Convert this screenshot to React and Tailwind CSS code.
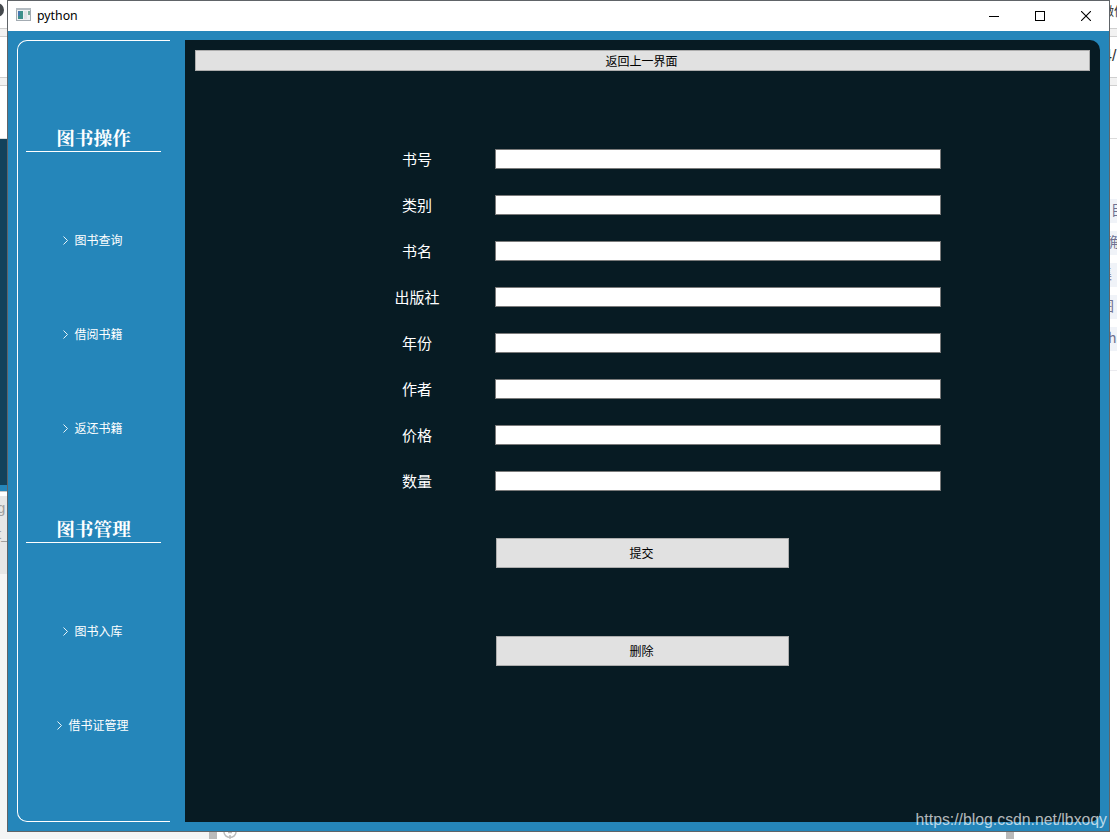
import React from "react";

const sections = [
  { title: "图书操作", items: ["图书查询", "借阅书籍", "返还书籍"] },
  { title: "图书管理", items: ["图书入库", "借书证管理"] },
];

const fields = ["书号", "类别", "书名", "出版社", "年份", "作者", "价格", "数量"];

const tags = [
  { text: "目", offset: "ml-px" },
  { text: "确", offset: "-ml-[5px]" },
  { text: "集", offset: "-ml-[12px]" },
  { text: "图", offset: "-ml-[10px]" },
  { text: "ha", offset: "-ml-[2px]" },
];

const TitleBar = () => (
  <div className="h-[30px] bg-white flex items-center justify-between">
    <div className="flex items-center pl-2">
      <svg className="w-4 h-4" viewBox="0 0 16 16">
        <rect x="0.5" y="0.5" width="14" height="12" fill="#eef0f2" stroke="#a3abb2" />
        <rect x="0" y="0" width="15" height="2" fill="#b4bcc2" />
        <rect x="2" y="3" width="5" height="8" fill="#3d8f8a" />
        <rect x="2" y="3" width="2" height="5" fill="#4478b0" />
        <rect x="8" y="3" width="3" height="8" fill="#dfe2e4" />
        <rect x="12" y="3" width="2" height="4" fill="#79ad9c" />
      </svg>
      <span className="ml-[5px] text-[12.3px] leading-[30px] text-black font-['Noto_Sans','Open_Sans',sans-serif]">
        python
      </span>
    </div>
    <div className="flex">
      <button className="w-[45px] h-[30px] flex items-center justify-center">
        <svg width="11" height="10" shapeRendering="crispEdges">
          <rect y="5" width="10" height="1" />
        </svg>
      </button>
      <button className="w-[46px] h-[30px] flex items-center justify-center">
        <svg width="10" height="10" shapeRendering="crispEdges">
          <rect x="0.5" y="0.5" width="9" height="9" fill="none" stroke="#000" />
        </svg>
      </button>
      <button className="w-[46px] h-[30px] flex items-center justify-center">
        <svg width="10" height="10">
          <path d="M0 0L10 10M10 0L0 10" stroke="#000" strokeWidth="1.1" />
        </svg>
      </button>
    </div>
  </div>
);

const Sidebar = () => (
  <div className="w-[153px] shrink-0 border border-r-0 border-white rounded-l-[10px] pl-2 pr-[9px] text-white">
    {sections.map((section, index) => (
      <div key={section.title}>
        <div
          className={`border-b border-white flex items-end justify-center ${
            index === 0 ? "h-[111px]" : "h-[68px]"
          }`}
        >
          <h3 className="pb-px text-[18.7px] leading-[26px] font-bold font-['Noto_Serif_CJK_SC','Noto_Sans_CJK_SC',serif]">
            {section.title}
          </h3>
        </div>
        <div className="pt-[41px]">
          {section.items.map((item) => (
            <button
              key={item}
              className="w-full h-[94px] flex items-center justify-center gap-[6px] pr-px text-[12px]"
            >
              <svg width="5" height="9" viewBox="0 0 5 9">
                <path d="M0.5 0.5L4.5 4.5L0.5 8.5" fill="none" stroke="#fff" strokeWidth="0.9" />
              </svg>
              {item}
            </button>
          ))}
        </div>
      </div>
    ))}
  </div>
);

const BookForm = () => (
  <div className="flex-1 bg-[#071b23] rounded-r-[10px] p-[10px]">
    <button className="w-full h-[21px] pr-[2px] flex items-center justify-center bg-[#e1e1e1] border border-[#adadad] text-[12px] text-black">
      返回上一界面
    </button>
    <div className="pt-[65px] pl-[183px]">
      {fields.map((field) => (
        <div key={field} className="h-[46px] flex items-center">
          <label className="w-[78px] text-center text-[15px] leading-5 text-white">
            {field}
          </label>
          <input
            type="text"
            className="ml-[39px] w-[446px] h-5 bg-white border border-[#7a7a7a] outline-none"
          />
        </div>
      ))}
    </div>
    <div className="pt-[34px] pl-[301px] flex flex-col gap-[68px]">
      {["提交", "删除"].map((action) => (
        <button
          key={action}
          className="w-[293px] h-[30px] pr-[2px] flex items-center justify-center bg-[#e1e1e1] border border-[#adadad] text-[12px] text-black"
        >
          {action}
        </button>
      ))}
    </div>
  </div>
);

// Slices of the browser page behind the window
const LeftEdge = () => (
  <div className="w-[7px] shrink-0 overflow-hidden flex flex-col bg-white text-[#a0a0a0]">
    <div className="h-7 shrink-0 pt-[3px]">
      <div className="w-[14px] h-[14px] -ml-[10px] rounded-full bg-[#45494d]" />
    </div>
    <div className="h-[9px] shrink-0 bg-[#f2f2f2] border-y border-[#cfcfcf]" />
    <div className="h-10 shrink-0" />
    <div className="h-[9px] shrink-0 bg-[#f2f2f2] border-y border-[#cfcfcf]" />
    <div className="h-[53px] shrink-0 border-b border-[#dcdcdc]" />
    <div className="h-[346px] shrink-0 bg-[#12425b]" />
    <div className="h-[6px] shrink-0 bg-[#2586ba]" />
    <div className="h-[5px] shrink-0 border-t border-[#c8c8c8]" />
    <div className="h-[78px] shrink-0 bg-[#e7e7e7] text-[15px] leading-[26px] font-['Liberation_Sans',sans-serif]">
      <div className="-ml-[3px] -mt-px">g</div>
      <div className="-ml-[3px] whitespace-nowrap">t_</div>
    </div>
    <div className="flex-1 bg-[#f5f5f5]" />
  </div>
);

const RightEdge = () => (
  <div className="w-[7px] shrink-0 overflow-hidden flex flex-col bg-white">
    <div className="h-7 shrink-0 text-[12px] leading-7 text-[#333] whitespace-nowrap">
      <div className="-ml-[8px] -mt-[3px]">微信</div>
    </div>
    <div className="h-[9px] shrink-0 bg-[#f2f2f2] border-y border-[#cfcfcf]" />
    <div className="h-10 shrink-0 text-[16px] leading-[38px] text-[#333] font-['Liberation_Sans',sans-serif]">
      <div className="-ml-[7px] whitespace-nowrap">4/</div>
    </div>
    <div className="h-[9px] shrink-0 bg-[#f2f2f2] border-y border-[#cfcfcf]" />
    <div className="h-[53px] shrink-0 border-b border-[#dcdcdc]" />
    <div className="h-[232px] shrink-0 pt-[60px] flex flex-col gap-2 border-b border-[#ececf0]">
      {tags.map((tag) => (
        <div
          key={tag.text}
          className="h-6 shrink-0 bg-[#f0f3f8] text-[14px] leading-5 text-[#6f7191] whitespace-nowrap"
        >
          <div className={tag.offset}>{tag.text}</div>
        </div>
      ))}
    </div>
    <div className="flex-1" />
  </div>
);

const BottomEdge = () => (
  <div className="h-[7px] overflow-hidden flex bg-white">
    <div className="w-[209px] bg-[#f5f5f5]" />
    <div className="w-2 bg-[#bababa]" />
    <div className="w-[789px] pl-[6px]">
      <svg width="14" height="7" viewBox="0 0 14 7" fill="none" stroke="#bdbdbd">
        <path d="M1 0A6 5.5 0 0 0 13 0M7 3V7M5 0.5H9" strokeWidth="1.5" />
      </svg>
    </div>
    <div className="w-2 bg-[#bababa]" />
  </div>
);

export default function App() {
  return (
    <div className="relative w-[1117px] h-[839px] overflow-hidden font-['Noto_Sans_CJK_SC',sans-serif]">
      <div className="h-[832px] flex">
        <LeftEdge />
        <div className="w-[1103px] shrink-0 flex flex-col border border-[#606468] bg-[#2586ba]">
          <TitleBar />
          <div className="flex-1 flex gap-[15px] p-[9px]">
            <Sidebar />
            <BookForm />
          </div>
        </div>
        <RightEdge />
      </div>
      <BottomEdge />
      <span className="absolute right-[10px] bottom-[9px] text-[15.8px] leading-5 text-white/70 whitespace-nowrap font-['Liberation_Sans',sans-serif]">
        https://blog.csdn.net/lbxoqy
      </span>
    </div>
  );
}
